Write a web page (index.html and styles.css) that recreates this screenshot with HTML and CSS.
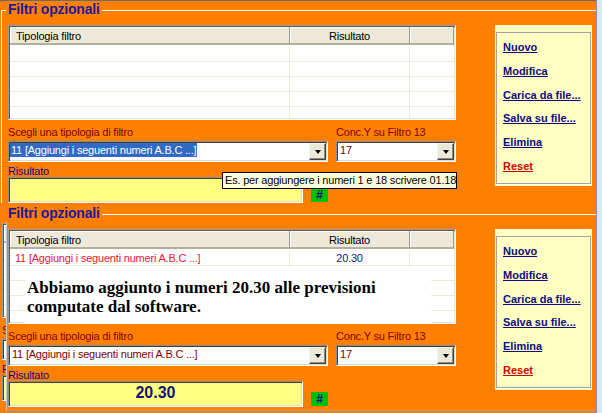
FILE: index.html
```html
<!DOCTYPE html>
<html lang="it">
<head>
<meta charset="utf-8">
<title>Filtri opzionali</title>
<link rel="stylesheet" href="styles.css">
</head>
<body>
<div class="screen">
  <div class="stack">

    <section class="panel p1">
      <div class="fieldset">
        <div class="legend">Filtri opzionali</div>
        <div class="body">
          <div class="main">
            <div class="table">
              <div class="thead"><div class="th c1">Tipologia filtro</div><div class="th c2">Risultato</div><div class="th c3"></div></div>
              <div class="tbody">
                <div class="tr"><div class="td c1"></div><div class="td c2"></div><div class="td c3"></div></div>
                <div class="tr"><div class="td c1"></div><div class="td c2"></div><div class="td c3"></div></div>
                <div class="tr"><div class="td c1"></div><div class="td c2"></div><div class="td c3"></div></div>
                <div class="tr"><div class="td c1"></div><div class="td c2"></div><div class="td c3"></div></div>
                <div class="tr"><div class="td c1"></div><div class="td c2"></div><div class="td c3"></div></div>
              </div>
            </div>
            <div class="fields">
              <div class="field">
                <div class="label">Scegli una tipologia di filtro</div>
                <div class="select s-type"><div class="sel-text"><span class="hl">11 [Aggiungi i seguenti numeri A.B.C ...]</span></div><div class="drop"></div></div>
              </div>
              <div class="field">
                <div class="label">Conc.Y su Filtro 13</div>
                <div class="select s-conc"><div class="sel-text val">17</div><div class="drop"></div></div>
              </div>
            </div>
            <div class="res-row">
              <div class="field">
                <div class="label res-label">Risultato</div>
                <div class="result"></div>
              </div>
              <div class="hash">#</div>
            </div>
          </div>
          <aside class="links">
            <div class="links-inner">
              <a href="#">Nuovo</a>
              <a href="#">Modifica</a>
              <a href="#">Carica da file...</a>
              <a href="#">Salva su file...</a>
              <a href="#">Elimina</a>
              <a href="#" class="reset">Reset</a>
            </div>
          </aside>
        </div>
      </div>
      <div class="tooltip">Es. per aggiungere i numeri 1 e 18 scrivere 01.18</div>
    </section>

    <div class="layer2">
      <div class="clone-wrap">
        <section class="panel clone">
          <div class="fieldset">
            <div class="legend legend-stub"></div>
            <div class="body">
              <div class="main">
                <div class="table">
                  <div class="thead"><div class="th c1"></div><div class="th c2"></div><div class="th c3"></div></div>
                  <div class="tbody">
                    <div class="tr"><div class="td c1"></div><div class="td c2"></div><div class="td c3"></div></div>
                    <div class="tr"><div class="td c1"></div><div class="td c2"></div><div class="td c3"></div></div>
                    <div class="tr"><div class="td c1"></div><div class="td c2"></div><div class="td c3"></div></div>
                    <div class="tr"><div class="td c1"></div><div class="td c2"></div><div class="td c3"></div></div>
                    <div class="tr"><div class="td c1"></div><div class="td c2"></div><div class="td c3"></div></div>
                  </div>
                </div>
                <div class="fields">
                  <div class="field">
                    <div class="label frag">S</div>
                    <div class="select s-type"><div class="sel-text val"></div><div class="drop"></div></div>
                  </div>
                </div>
                <div class="res-row">
                  <div class="field">
                    <div class="label res-label frag">R</div>
                    <div class="result"></div>
                  </div>
                </div>
              </div>
            </div>
          </div>
        </section>
      </div>

      <section class="panel p2">
        <div class="fieldset">
          <div class="legend">Filtri opzionali</div>
          <div class="body">
            <div class="main">
              <div class="table">
                <div class="thead"><div class="th c1">Tipologia filtro</div><div class="th c2">Risultato</div><div class="th c3"></div></div>
                <div class="tbody">
                  <div class="tr"><div class="td c1 red">11 [Aggiungi i seguenti numeri A.B.C ...]</div><div class="td c2 num">20.30</div><div class="td c3"></div></div>
                  <div class="tr"><div class="td c1"></div><div class="td c2"></div><div class="td c3"></div></div>
                  <div class="tr"><div class="td c1"></div><div class="td c2"></div><div class="td c3"></div></div>
                  <div class="tr"><div class="td c1"></div><div class="td c2"></div><div class="td c3"></div></div>
                  <div class="tr"><div class="td c1"></div><div class="td c2"></div><div class="td c3"></div></div>
                </div>
              </div>
              <div class="fields">
                <div class="field">
                  <div class="label">Scegli una tipologia di filtro</div>
                  <div class="select s-type"><div class="sel-text val">11 [Aggiungi i seguenti numeri A.B.C ...]</div><div class="drop"></div></div>
                </div>
                <div class="field">
                  <div class="label">Conc.Y su Filtro 13</div>
                  <div class="select s-conc"><div class="sel-text val">17</div><div class="drop"></div></div>
                </div>
              </div>
              <div class="res-row">
                <div class="field">
                  <div class="label res-label">Risultato</div>
                  <div class="result">20.30</div>
                </div>
                <div class="hash">#</div>
              </div>
            </div>
            <aside class="links">
              <div class="links-inner">
                <a href="#">Nuovo</a>
                <a href="#">Modifica</a>
                <a href="#">Carica da file...</a>
                <a href="#">Salva su file...</a>
                <a href="#">Elimina</a>
                <a href="#" class="reset">Reset</a>
              </div>
            </aside>
          </div>
        </div>
        <div class="msg">Abbiamo aggiunto i numeri 20.30 alle previsioni<br>computate dal software.</div>
      </section>
    </div>

  </div>
  <div class="edge"></div>
</div>
</body>
</html>
```

FILE: styles.css
```css
* { box-sizing: border-box; }
html, body { margin: 0; padding: 0; }
body {
  width: 602px;
  height: 413px;
  overflow: hidden;
  background: #FF8000;
  font-family: "Liberation Sans", Arial, sans-serif;
  font-size: 11px;
  letter-spacing: -0.2px;
  color: #000;
}
.screen { display: flex; height: 413px; }
.stack { width: 596px; display: flex; flex-direction: column; }
.edge { width: 6px; background: #cdeff2; border-left: 1px solid #8c8c8c; }

.panel { position: relative; width: 596px; height: 204px; overflow: hidden; background: #FF8000; flex: none; }
.p1 { box-shadow: inset 0 1px 0 #6b6b6b; }

.fieldset {
  margin: 10px 0 0 1px;
  border-top: 1px solid #fff;
  border-left: 1px solid #fff;
  padding-left: 6px;
}
.legend {
  width: max-content;
  margin: -10px 0 0 -2px;
  padding: 0 2px;
  background: #FF8000;
  font-size: 14px;
  font-weight: bold;
  line-height: 16px;
  color: #1e1a9c;
}
.legend-stub { width: 20px; height: 16px; }
.body { display: flex; margin-top: 8px; }
.main { width: 448px; display: flex; flex-direction: column; flex: none; }

/* list view */
.table {
  height: 95px;
  background: #fff;
  border: 1px solid;
  border-color: #9d9d9d #fff #fff #9d9d9d;
  box-shadow: inset 1px 1px 0 #5a5a5a, inset -1px -1px 0 #e6e3d6;
  padding: 1px;
  display: flex;
  flex-direction: column;
  overflow: hidden;
}
.thead { display: flex; height: 18px; flex: none; background: #ECE9D8; }
.th {
  height: 18px;
  padding-top: 3px;
  line-height: 13px;
  border-bottom: 2px solid #b4b09c;
  border-right: 1px solid #9f9b88;
  box-shadow: inset 1px 1px 0 #fff;
  color: #000;
  white-space: nowrap;
}
.c1 { width: 280px; flex: none; }
.c2 { width: 120px; flex: none; }
.c3 { flex: 1; }
.th.c1 { padding-left: 6px; }
.th.c2 { text-align: center; }
.tbody { padding-top: 2px; }
.tr { display: flex; height: 15px; border-bottom: 1px solid #ECE9D8; }
.td { border-right: 1px solid #ECE9D8; line-height: 14px; white-space: nowrap; }
.td.c1 { padding-left: 5px; }
.td.c3 { border-right: none; }
.red { color: #ee1438; }
.num { text-align: center; color: #1a1480; }

/* fields */
.fields { display: flex; gap: 8px; margin-top: 6px; }
.field { display: flex; flex-direction: column; }
.label { height: 13px; line-height: 13px; margin-bottom: 2px; color: #800000; white-space: nowrap; }
.res-label { height: 12px; line-height: 12px; margin-bottom: 0; color: #0c0c80; }
.frag { width: 5px; overflow: hidden; }

.select {
  display: flex;
  height: 21px;
  border: 1px solid;
  border-color: #8d8d8d #fff #fff #8d8d8d;
  box-shadow: inset 1px 1px 0 #404040, inset -1px -1px 0 #e0ddd0;
  background: #fff;
  padding: 1px;
}
.s-type { width: 320px; }
.s-conc { width: 120px; }
.sel-text { flex: 1; height: 14px; line-height: 14px; white-space: nowrap; overflow: hidden; }
.sel-text.val { padding-left: 2px; color: #800000; }
.hl { display: inline-block; background: #316AC5; color: #fff; padding: 0 1px; }
.drop {
  width: 17px;
  height: 17px;
  flex: none;
  background: #ECE9D8;
  border: 1px solid;
  border-color: #f4f3ee #404040 #404040 #f4f3ee;
  box-shadow: inset -1px -1px 0 #8f8c7e;
  display: flex;
  align-items: center;
  justify-content: center;
}
.drop::after {
  content: "";
  width: 0;
  height: 0;
  border-style: solid;
  border-width: 4px 3.5px 0 3.5px;
  border-color: #000 transparent transparent transparent;
}

.res-row { display: flex; align-items: flex-end; margin-top: 3px; }
.result {
  width: 295px;
  height: 26px;
  border: 1px solid;
  border-color: #8d8d8d #fff #fff #8d8d8d;
  box-shadow: inset 1px 1px 0 #404040, inset -1px -1px 0 #e0ddd0;
  background: #FFFF80;
  display: flex;
  align-items: center;
  justify-content: center;
  padding-bottom: 2px;
  font-size: 16px;
  font-weight: bold;
  letter-spacing: 0;
  color: #14127c;
}
.hash {
  width: 17px;
  height: 14px;
  margin: 0 0 1px 8px;
  background: #00C000;
  color: #0a0a80;
  font-size: 12px;
  font-weight: bold;
  line-height: 14px;
  text-align: center;
  letter-spacing: 0;
}

/* links box */
.links {
  width: 97px;
  height: 161px;
  margin-left: 39px;
  flex: none;
  background: #FFFFC4;
  padding: 7px 1px 2px 1px;
}
.links-inner {
  height: 100%;
  border: 1px solid #a3a3a3;
  box-shadow: 1px 1px 0 #fff;
  padding: 3px 0 0 6px;
  display: flex;
  flex-direction: column;
}
.links a {
  display: block;
  width: max-content;
  line-height: 23.8px;
  font-weight: bold;
  letter-spacing: 0;
  color: #0e0c82;
  text-decoration: underline;
}
.links a.reset { color: #d00000; }

/* tooltip */
.tooltip {
  position: absolute;
  left: 222px;
  top: 172px;
  width: 235px;
  height: 17px;
  border: 1px solid #000;
  background: #FFFFE1;
  padding-left: 2px;
  line-height: 15px;
  white-space: nowrap;
  color: #000;
}

/* second layer: a window pasted over another copy */
.layer2 { position: relative; height: 209px; overflow: hidden; background: #FF8000; }
.clone-wrap { position: absolute; left: 0; top: 0; width: 7px; height: 209px; overflow: hidden; }
.clone { position: absolute; left: -6px; top: -6px; }
.p2 {
  height: 207px;
  border-bottom: 1px solid #a0a0a0;
  clip-path: inset(0 0 0 6px);
}
.p2::before {
  content: "";
  position: absolute;
  left: 6px;
  top: 18px;
  bottom: 0;
  width: 1px;
  background: #c9c9c9;
}
.msg {
  position: absolute;
  left: 25px;
  top: 63px;
  width: 406px;
  height: 56px;
  background: #fff;
  padding: 11px 0 0 2px;
  font-family: "Liberation Serif", "Times New Roman", serif;
  font-weight: bold;
  font-size: 17px;
  line-height: 19px;
  letter-spacing: 0;
  color: #000;
  white-space: nowrap;
}
```
